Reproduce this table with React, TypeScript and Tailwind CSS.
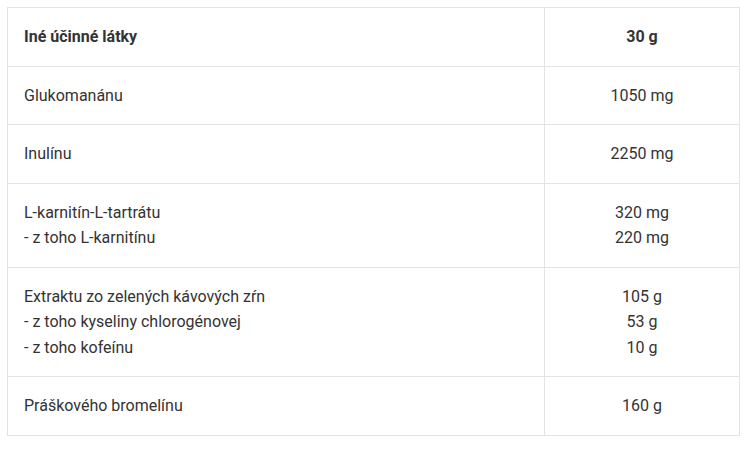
export default function App() {
  const rows: { name: string[]; value: string[] }[] = [
    { name: ["Glukomanánu"], value: ["1050 mg"] },
    { name: ["Inulínu"], value: ["2250 mg"] },
    { name: ["L-karnitín-L-tartrátu", "- z toho L-karnitínu"], value: ["320 mg", "220 mg"] },
    {
      name: [
        "Extraktu zo zelených kávových zŕn",
        "- z toho kyseliny chlorogénovej",
        "- z toho kofeínu",
      ],
      value: ["105 g", "53 g", "10 g"],
    },
    { name: ["Práškového bromelínu"], value: ["160 g"] },
  ];

  return (
    <div className="min-h-screen bg-white p-[7px] font-['Roboto',sans-serif] text-[16px] leading-[25.5px] text-[#333333]">
      <table className="w-[733px] border-collapse border border-[#e3e3e3]">
        <thead>
          <tr>
            <th className="w-[537px] border border-[#e3e3e3] px-4 py-4 text-left font-bold">
              Iné účinné látky
            </th>
            <th className="border border-[#e3e3e3] px-4 py-4 text-center font-bold">30 g</th>
          </tr>
        </thead>
        <tbody>
          {rows.map((r, i) => (
            <tr key={i}>
              <td className="border border-[#e3e3e3] px-4 py-4 align-middle">
                {r.name.map((n) => (
                  <div key={n}>{n}</div>
                ))}
              </td>
              <td className="border border-[#e3e3e3] px-4 py-4 text-center align-middle">
                {r.value.map((v) => (
                  <div key={v}>{v}</div>
                ))}
              </td>
            </tr>
          ))}
        </tbody>
      </table>
    </div>
  );
}
